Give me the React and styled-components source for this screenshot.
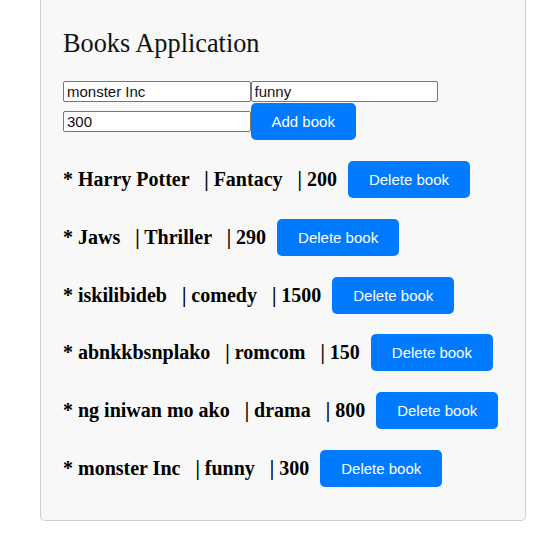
import React, { useState } from "react";
import styled, { createGlobalStyle } from "styled-components";

const GlobalStyle = createGlobalStyle`
  body {
    margin: 0;
    background: #ffffff;
    font-family: "Liberation Serif", "Times New Roman", serif;
  }
`;

const Panel = styled.div`
  box-sizing: border-box;
  width: 486px;
  margin: 0 0 0 40px;
  padding: 29px 22px 33px;
  background: #f8f8f8;
  border: 1px solid #cfcfcf;
  border-top: none;
  border-radius: 0 0 5px 5px;
`;

const Title = styled.h1`
  margin: 0 0 23px;
  font-size: 26.3px;
  font-weight: normal;
  line-height: 29px;
  color: #111;
`;

const Form = styled.div`
  display: flex;
  flex-wrap: wrap;
  align-items: center;
  row-gap: 1px;
`;

const Input = styled.input`
  box-sizing: border-box;
  width: 187.5px;
  height: 21px;
  padding: 1px 3px;
  border: 1px solid #767676;
  border-radius: 2px;
  background: #fff;
  font-family: "Liberation Sans", Arial, sans-serif;
  font-size: 15px;
  color: #111;
`;

const Button = styled.button`
  padding: 10px 21px;
  border: none;
  border-radius: 5px;
  background: #007bff;
  color: #fff;
  font-family: "Liberation Sans", Arial, sans-serif;
  font-size: 15px;
  line-height: 17px;
  cursor: pointer;
`;

const List = styled.div`
  display: flex;
  flex-direction: column;
  gap: 20.8px;
  margin-top: 21px;
`;

const Row = styled.div`
  display: flex;
  align-items: center;
  gap: 11px;
`;

const BookText = styled.h3`
  margin: 0;
  font-size: 20px;
  font-weight: bold;
  color: #000;
  white-space: pre;
`;

const initialBooks = [
  { title: "Harry Potter", genre: "Fantacy", price: 200 },
  { title: "Jaws", genre: "Thriller", price: 290 },
  { title: "iskilibideb", genre: "comedy", price: 1500 },
  { title: "abnkkbsnplako", genre: "romcom", price: 150 },
  { title: "ng iniwan mo ako", genre: "drama", price: 800 },
  { title: "monster Inc", genre: "funny", price: 300 },
];

export default function App() {
  const [books, setBooks] = useState(initialBooks);
  const [title, setTitle] = useState("monster Inc");
  const [genre, setGenre] = useState("funny");
  const [price, setPrice] = useState("300");

  const addBook = () => setBooks([...books, { title, genre, price }]);
  const deleteBook = (i) => setBooks(books.filter((_, j) => j !== i));

  return (
    <>
      <GlobalStyle />
      <Panel>
        <Title>Books Application</Title>
        <Form>
          <Input value={title} onChange={(e) => setTitle(e.target.value)} />
          <Input value={genre} onChange={(e) => setGenre(e.target.value)} />
          <Input value={price} onChange={(e) => setPrice(e.target.value)} />
          <Button onClick={addBook}>Add book</Button>
        </Form>
        <List>
          {books.map((b, i) => (
            <Row key={i}>
              <BookText>{`* ${b.title} \u00a0 | ${b.genre} \u00a0 | ${b.price}`}</BookText>
              <Button onClick={() => deleteBook(i)}>Delete book</Button>
            </Row>
          ))}
        </List>
      </Panel>
    </>
  );
}
